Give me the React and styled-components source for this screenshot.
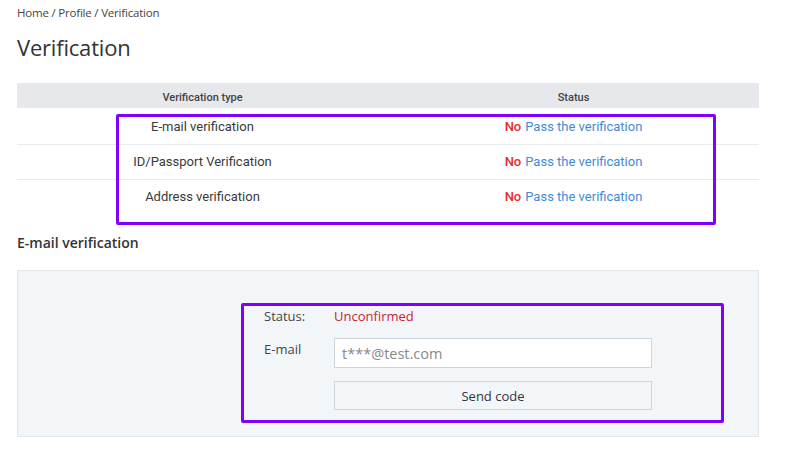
import React from "react";
import styled, { createGlobalStyle } from "styled-components";

const Global = createGlobalStyle`
  html, body { margin: 0; padding: 0; background: #fff; }
  body { font-family: "Open Sans", "Noto Sans", sans-serif; color: #333; }
  * { box-sizing: border-box; }
`;

const Page = styled.div`
  width: 742px;
  margin-left: 17px;
  padding-top: 5px;
`;

const Breadcrumb = styled.nav`
  font-size: 11.5px;
  line-height: 16px;
  color: #444;
  letter-spacing: -0.2px;
`;

const Title = styled.h1`
  margin: 11px 0 21px;
  font-size: 22px;
  line-height: 30px;
  font-weight: 400;
  color: #333;
  letter-spacing: -0.2px;
`;

const TableWrap = styled.div`
  position: relative;
`;

const Table = styled.table`
  width: 100%;
  border-collapse: collapse;
  font-family: Roboto, "Liberation Sans", sans-serif;
`;

const Th = styled.th`
  width: 50%;
  height: 25px;
  padding: 3px 0 0;
  background: #e6e8eb;
  font-size: 11px;
  font-weight: 500;
  color: #444;
  text-align: center;
`;

const Tr = styled.tr`
  & + & td { border-top: 1px solid #e9ecef; }
`;

const Td = styled.td`
  height: ${(p) => p.$h || 35}px;
  padding: ${(p) => p.$pt || 0}px 0 0;
  text-align: center;
  font-size: 13px;
  color: #3a3a3a;
`;

const No = styled.span`
  color: #ec2a2a;
  font-weight: 500;
`;

const Pass = styled.a`
  color: #3f8bd4;
  text-decoration: none;
  margin-left: 4px;
`;

const Highlight = styled.div`
  position: absolute;
  left: ${(p) => p.$x}px;
  top: ${(p) => p.$y}px;
  width: ${(p) => p.$w}px;
  height: ${(p) => p.$h}px;
  border: 3px solid #8000ff;
  border-radius: 2px;
  pointer-events: none;
`;

const SectionTitle = styled.h2`
  margin: 19px 0 0;
  font-size: 14px;
  line-height: 20px;
  font-weight: 600;
  color: #333;
`;

const Panel = styled.div`
  position: relative;
  margin-top: 17px;
  background: #f3f6f9;
  border: 1px solid #e2e7eb;
  padding: 35px 0 26px 246px;
`;

const Form = styled.div`
  display: grid;
  grid-template-columns: 70px 318px;
  row-gap: 12px;
  font-size: 13px;
`;

const Label = styled.div`
  line-height: 20px;
  color: #444;
  padding-top: ${(p) => p.$pt || 0}px;
`;

const Value = styled.div`
  line-height: 20px;
  color: #c8233a;
`;

const Input = styled.input`
  width: 318px;
  height: 30px;
  border: 1px solid #cfd6db;
  background: #fff;
  padding: 0 7px;
  font-family: "Open Sans", sans-serif;
  font-size: 14.5px;
  color: #888;
  outline: none;
`;

const Button = styled.button`
  grid-column: 2;
  margin-top: 1px;
  height: 29px;
  border: 1px solid #cfd6db;
  background: #f3f6f9;
  font-family: "Open Sans", sans-serif;
  font-size: 13px;
  color: #333;
`;

const rows = [
  ["E-mail verification", 36, 2],
  ["ID/Passport Verification", 35, 0],
  ["Address verification", 35, 0],
];

export default function App() {
  return (
    <>
      <Global />
      <Page>
        <Breadcrumb>Home / Profile / Verification</Breadcrumb>
        <Title>Verification</Title>
        <TableWrap>
          <Table>
            <thead>
              <tr>
                <Th>Verification type</Th>
                <Th>Status</Th>
              </tr>
            </thead>
            <tbody>
              {rows.map(([name, h, pt]) => (
                <Tr key={name}>
                  <Td $h={h} $pt={pt}>{name}</Td>
                  <Td $h={h} $pt={pt}>
                    <No>No</No>
                    <Pass href="#">Pass the verification</Pass>
                  </Td>
                </Tr>
              ))}
            </tbody>
          </Table>
          <Highlight $x={99} $y={31} $w={600} $h={111} />
        </TableWrap>
        <SectionTitle>E-mail verification</SectionTitle>
        <Panel>
          <Form>
            <Label>Status:</Label>
            <Value>Unconfirmed</Value>
            <Label $pt={1}>E-mail</Label>
            <Input defaultValue="t***@test.com" readOnly />
            <Button>Send code</Button>
          </Form>
          <Highlight $x={223} $y={32} $w={483} $h={120} />
        </Panel>
      </Page>
    </>
  );
}
